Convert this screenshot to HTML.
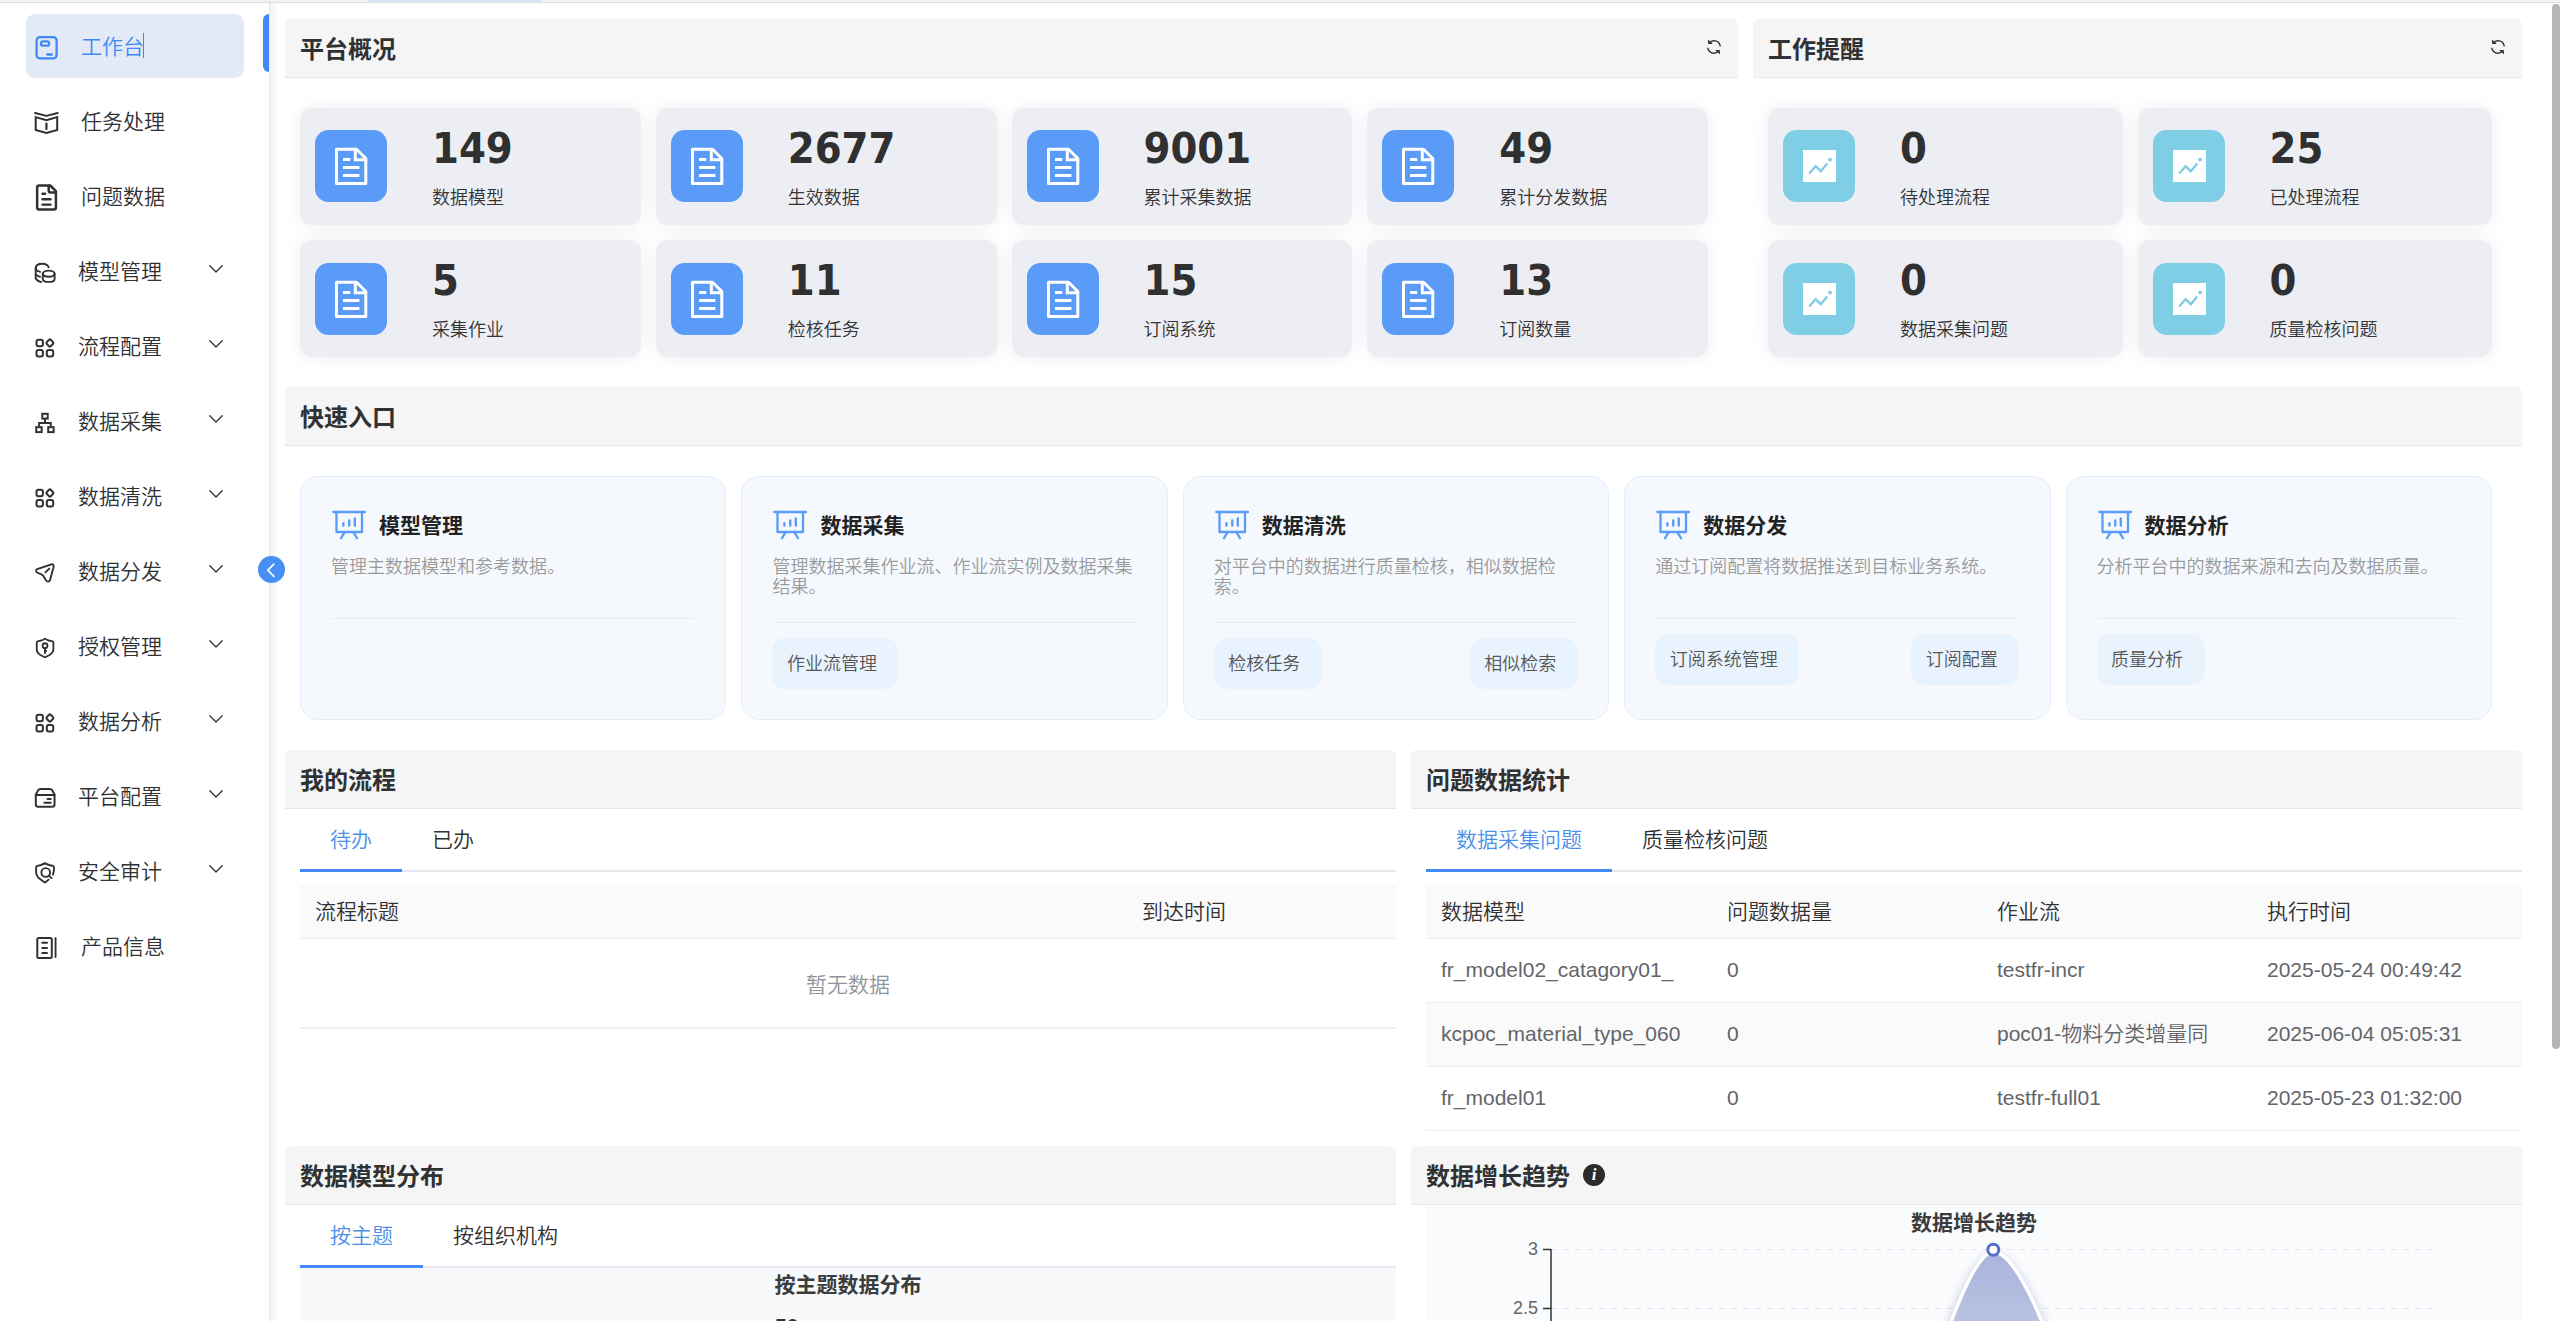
<!DOCTYPE html>
<html lang="zh-CN">
<head>
<meta charset="utf-8">
<title>工作台</title>
<style>
*{box-sizing:border-box;margin:0;padding:0}
html,body{width:2560px;height:1321px;overflow:hidden;background:#fff}
body{position:relative;font-family:"Liberation Sans","Noto Sans CJK SC",sans-serif;font-size:21px;font-weight:350;color:#303133;-webkit-font-smoothing:antialiased}
.abs{position:absolute}
/* top strip */
#topstrip{position:absolute;left:0;top:0;width:2560px;height:3px;background:#f1f2f5;border-bottom:1px solid #dcdee3}
#topstrip i{position:absolute;left:368px;top:0;width:174px;height:2px;background:#dbe5f6}
/* sidebar */
#side{position:absolute;left:0;top:3px;width:270px;height:1318px;background:#fff;border-right:1px solid #e6e6e8}
#mainshadow{position:absolute;left:270px;top:3px;width:9px;height:1318px;background:linear-gradient(90deg,rgba(0,0,0,.05),rgba(0,0,0,0))}
.mi{position:absolute;left:26px;width:218px;height:64px;border-radius:9px;color:#303133;font-size:21px;line-height:64px;white-space:nowrap}
.mi.act{background:#e1eaf6;color:#4189f3}
.mi svg.ic{position:absolute;left:8px;top:20px;width:24px;height:24px;overflow:visible}
.mi span{position:absolute;left:55px;top:1px}
.mi.sub span{left:52px}
.mi svg.ar{position:absolute;left:183px;top:26px;width:14px;height:8px;overflow:visible}
#actbar{position:absolute;left:263px;top:14px;width:6px;height:58px;background:#4289f7;border-radius:6px 0 0 6px}
#collapse{position:absolute;left:258.2px;top:556px;width:27px;height:27px;border-radius:50%;background:#468ff5}
#scroll{position:absolute;left:2552px;top:4px;width:8px;height:1045px;background:#b5b6ba;border-radius:4px}
/* panels */
.ph{position:absolute;height:59px;background:#f5f5f5;border-bottom:1px solid #e2e9f5;border-radius:6px 6px 0 0;font-weight:bold;font-size:24px;line-height:61px;padding-left:15px;color:#303133;white-space:nowrap}
.sc{position:absolute;height:117px;background:#edeef4;border-radius:12px;box-shadow:0 0 18px rgba(0,0,0,.07)}
.sc .ib{position:absolute;left:15px;top:22px;width:72px;height:72px;border-radius:13.5px;background:#5b9bf8}
.sc .ib.t{background:#80cde6}
.sc .n{position:absolute;left:132px;top:14px;font:bold 43px/52px "DejaVu Sans Condensed","DejaVu Sans","Liberation Sans",sans-serif;color:#303030;white-space:nowrap}
.sc .l{position:absolute;left:132px;top:77.75px;font-size:18px;line-height:24px;color:#333;white-space:nowrap}
.mi .caret{position:absolute;left:117px;top:19px;width:1px;height:25px;background:#3d86ee}
.rfw{position:absolute;top:20px;width:16px;height:16px;line-height:0}
.rfw svg{display:block}
.infoi{position:absolute;left:172px;top:18px;width:22px;height:22px;border-radius:50%;background:#2b2b2b;color:#fff;font:italic bold 17px/22px "Liberation Serif","DejaVu Serif",serif;text-align:center}
/* quick cards */
.qc{position:absolute;top:476px;width:426.4px;height:244px;background:#f5f9fe;border:1.5px solid #e2edfc;border-radius:18px}
.qc .qi{position:absolute;left:31px;top:33px}
.qc .qt{position:absolute;left:78px;top:34px;font-weight:bold;font-size:21px;line-height:30px;color:#222;white-space:nowrap}
.qc .qd{position:absolute;left:30px;top:79.5px;width:370px;font-size:18px;line-height:20.5px;color:#9a9a9a;white-space:nowrap}
.qc .qv{position:absolute;left:30px;width:364px;height:1px;background:#e9edf2}
.qc .qbs{position:absolute;left:30px;width:364px;display:flex;justify-content:space-between}
.qb{display:block;height:50.5px;line-height:52px;padding:0 21.5px 0 14.5px;background:#e9f3fe;border-radius:13px;font-size:18px;color:#555;white-space:nowrap}
/* tabs & tables */
.tabs{position:absolute;height:63px;border-bottom:2px solid #e4e7ed;white-space:nowrap;font-size:0}
.tab{position:relative;display:inline-block;height:61px;line-height:61.5px;text-align:center;font-size:21px;color:#303133;vertical-align:top}
.tab.on{color:#4a8fe9}
.tab.on::after{content:"";position:absolute;left:0;right:0;bottom:-2px;height:3px;background:#4289f7}
.th{position:absolute;height:54px;background:#fafafa;border-bottom:1px solid #ebeef5;font-size:21px;line-height:54px;color:#303133}
.th span,.tr span{position:absolute;top:0;white-space:nowrap}
.tr{position:absolute;height:64px;border-bottom:1px solid #ebeef5;font-size:21px;line-height:62.5px;color:#63656a}
.tr.st{background:#fafafa}
.empty{position:absolute;height:90px;border-bottom:2px solid #ebeef5;text-align:center;font-size:21px;line-height:92px;color:#909399}
.chartbg{position:absolute;overflow:hidden}
.ct{position:absolute;left:0;width:100%;text-align:center;font-weight:bold;font-size:21px;line-height:28px;color:#3c3c3c}
.csub{position:absolute;left:475px;top:46px;font:bold 21px/24px "Liberation Sans",sans-serif;color:#333}
</style>
</head>
<body>
<div id="topstrip"><i></i></div>
<div id="side"></div>
<div id="mainshadow"></div>
<div id="actbar"></div>
<div id="scroll"></div>
<div class="mi act" style="top:14px"><svg class="ic" viewBox="0 0 24 24" fill="none" stroke="currentColor" stroke-width="2" stroke-linecap="round" stroke-linejoin="round"><g stroke-width="2.3"><rect x="2.6" y="3.05" width="20" height="21.4" rx="3.4"/><rect x="7" y="7.4" width="8.1" height="4.3" rx="2"/><path d="M13.3 20.5H17.8"/></g></svg><span>工作台</span><i class="caret"></i></div>
<div class="mi" style="top:89px"><svg class="ic" viewBox="0 0 24 24" fill="none" stroke="currentColor" stroke-width="2" stroke-linecap="round" stroke-linejoin="round"><g stroke-width="2"><path d="M1.1 4 12.45 6.9 23.7 4"/><path d="M1.7 8.1 12.45 11.3 23.2 8.1V21L12.45 23.9 1.7 21Z" stroke-linejoin="miter"/><path d="M12.45 14.6V20.1" stroke-width="2.2"/></g></svg><span>任务处理</span></div>
<div class="mi" style="top:164px"><svg class="ic" viewBox="0 0 24 24" fill="none" stroke="currentColor" stroke-width="2" stroke-linecap="round" stroke-linejoin="round"><g stroke-width="2.5"><path d="M5.15 1.5H16.2L21.9 7.2V23.5Q21.9 25.5 19.9 25.5H5.15Q3.15 25.5 3.15 23.5V3.5Q3.15 1.5 5.15 1.5Z"/><path d="M14.7 1.8V6.6Q14.7 8.6 16.7 8.6H21.6"/><path d="M8.5 9.7H11.1M8.5 15.2H16.55M8.5 20.6H16.55" stroke-width="2.4"/></g></svg><span>问题数据</span></div>
<div class="mi sub" style="top:239px"><svg class="ic" viewBox="0 0 24 24" fill="none" stroke="currentColor" stroke-width="2" stroke-linecap="round" stroke-linejoin="round"><g stroke-width="1.9"><path d="M1.7 9.3C1.7 6 5 4.7 8.2 4.7 11.5 4.7 13.8 6 14.6 8.2"/><path d="M1.7 9.3V19.3"/><path d="M1.7 10.2C2.7 11.6 4.5 12.5 6.2 12.9M1.7 15.3C2.7 16.7 4.5 17.5 6.2 17.9M1.7 19.3C2.5 21.2 5 22.4 7.2 23.1"/><ellipse cx="14.7" cy="14.7" rx="5.9" ry="3.1"/><path d="M8.8 14.7V19.9C8.8 21.6 11.4 22.9 14.7 22.9S20.6 21.6 20.6 19.9V14.7"/></g></svg><span>模型管理</span><svg class="ar" viewBox="0 0 14 8" fill="none" stroke="#303133" stroke-width="1.300" stroke-linecap="round" stroke-linejoin="round"><path d="M.8.800 7 7 13.200.8"/></svg></div>
<div class="mi sub" style="top:314px"><svg class="ic" viewBox="0 0 24 24" fill="none" stroke="currentColor" stroke-width="2" stroke-linecap="round" stroke-linejoin="round"><g stroke-width="2"><rect x="2.5" y="5.7" width="6.4" height="6.5" rx="2"/><rect x="2.5" y="16" width="6.4" height="6.4" rx="2"/><rect x="12.8" y="16" width="6.4" height="6.4" rx="2"/><rect x="13" y="6.1" width="5.8" height="5.8" rx="1.5" transform="rotate(45 15.9 9)"/></g></svg><span>流程配置</span><svg class="ar" viewBox="0 0 14 8" fill="none" stroke="#303133" stroke-width="1.300" stroke-linecap="round" stroke-linejoin="round"><path d="M.8.800 7 7 13.200.8"/></svg></div>
<div class="mi sub" style="top:389px"><svg class="ic" viewBox="0 0 24 24" fill="none" stroke="currentColor" stroke-width="2" stroke-linecap="round" stroke-linejoin="round"><g stroke-width="2" stroke-linejoin="miter" stroke-linecap="butt"><rect x="8.3" y="4.8" width="5.4" height="4.8"/><rect x="2.25" y="18.15" width="5.4" height="4.95"/><rect x="14.2" y="18.15" width="5.4" height="4.95"/><path d="M11 9.6V14M5.1 17.2V14H16.75V17.2"/></g></svg><span>数据采集</span><svg class="ar" viewBox="0 0 14 8" fill="none" stroke="#303133" stroke-width="1.300" stroke-linecap="round" stroke-linejoin="round"><path d="M.8.800 7 7 13.200.8"/></svg></div>
<div class="mi sub" style="top:464px"><svg class="ic" viewBox="0 0 24 24" fill="none" stroke="currentColor" stroke-width="2" stroke-linecap="round" stroke-linejoin="round"><g stroke-width="2"><rect x="2.5" y="5.7" width="6.4" height="6.5" rx="2"/><rect x="2.5" y="16" width="6.4" height="6.4" rx="2"/><rect x="12.8" y="16" width="6.4" height="6.4" rx="2"/><rect x="13" y="6.1" width="5.8" height="5.8" rx="1.5" transform="rotate(45 15.9 9)"/></g></svg><span>数据清洗</span><svg class="ar" viewBox="0 0 14 8" fill="none" stroke="#303133" stroke-width="1.300" stroke-linecap="round" stroke-linejoin="round"><path d="M.8.800 7 7 13.200.8"/></svg></div>
<div class="mi sub" style="top:539px"><svg class="ic" viewBox="0 0 24 24" fill="none" stroke="currentColor" stroke-width="2" stroke-linecap="round" stroke-linejoin="round"><g stroke-width="1.9"><path d="M17.45 5.3 3.2 10.2C1.7 10.8 1.6 12.6 3.2 13.5L7.75 15.6C8.8 16.1 9.3 16.6 9.6 17.2L12 21.4C12.9 23 15.3 23 15.9 21.4L19.6 8.1C20.1 6.2 18.9 4.8 17.45 5.3Z"/><path d="M11.4 13.4 15.3 9.6"/></g></svg><span>数据分发</span><svg class="ar" viewBox="0 0 14 8" fill="none" stroke="#303133" stroke-width="1.300" stroke-linecap="round" stroke-linejoin="round"><path d="M.8.800 7 7 13.200.8"/></svg></div>
<div class="mi sub" style="top:614px"><svg class="ic" viewBox="0 0 24 24" fill="none" stroke="currentColor" stroke-width="2" stroke-linecap="round" stroke-linejoin="round"><g stroke-width="1.8"><path d="M11 4.6C10 5.4 8.6 6.200 7.4 6.5L4.2 7.1C3.2 7.3 2.75 7.9 2.75 8.8V15.6C2.75 17.8 4.2 19.5 6 20.7L10.2 23C10.7 23.3 11.3 23.3 11.8 23L16 20.7C17.8 19.5 19.4 17.8 19.4 15.6V8.8C19.4 7.9 18.9 7.3 17.9 7.1L14.7 6.5C13.4 6.2 12 5.4 11 4.6Z"/><circle cx="11" cy="11.7" r="2.45"/><path d="M11 14.2V19.3"/><path d="M11.2 15.9 13 16.900 11.2 17.9Z" fill="currentColor" stroke-width="1"/></g></svg><span>授权管理</span><svg class="ar" viewBox="0 0 14 8" fill="none" stroke="#303133" stroke-width="1.300" stroke-linecap="round" stroke-linejoin="round"><path d="M.8.800 7 7 13.200.8"/></svg></div>
<div class="mi sub" style="top:689px"><svg class="ic" viewBox="0 0 24 24" fill="none" stroke="currentColor" stroke-width="2" stroke-linecap="round" stroke-linejoin="round"><g stroke-width="2"><rect x="2.5" y="5.7" width="6.4" height="6.5" rx="2"/><rect x="2.5" y="16" width="6.4" height="6.4" rx="2"/><rect x="12.8" y="16" width="6.4" height="6.4" rx="2"/><rect x="13" y="6.1" width="5.8" height="5.8" rx="1.5" transform="rotate(45 15.9 9)"/></g></svg><span>数据分析</span><svg class="ar" viewBox="0 0 14 8" fill="none" stroke="#303133" stroke-width="1.300" stroke-linecap="round" stroke-linejoin="round"><path d="M.8.800 7 7 13.200.8"/></svg></div>
<div class="mi sub" style="top:764px"><svg class="ic" viewBox="0 0 24 24" fill="none" stroke="currentColor" stroke-width="2" stroke-linecap="round" stroke-linejoin="round"><g stroke-width="2"><path d="M1.8 11H20.55V20.3Q20.55 22.8 18.05 22.8H4.3Q1.8 22.8 1.8 20.3Z"/><path d="M1.8 10.6 3.9 6.6Q4.8 5 6.6 5H15.7Q17.5 5 18.4 6.6L20.55 10.6"/><path d="M13.6 14.9H16.75M10.3 18.7H16.75"/></g></svg><span>平台配置</span><svg class="ar" viewBox="0 0 14 8" fill="none" stroke="#303133" stroke-width="1.300" stroke-linecap="round" stroke-linejoin="round"><path d="M.8.800 7 7 13.200.8"/></svg></div>
<div class="mi sub" style="top:839px"><svg class="ic" viewBox="0 0 24 24" fill="none" stroke="currentColor" stroke-width="2" stroke-linecap="round" stroke-linejoin="round"><g stroke-width="1.9"><path d="M19 15.6C19.7 13.5 20 11 20 8.6 20 7.6 19.5 7 18.5 6.800L15 6C13.6 5.6 12.2 4.9 10.95 4.1 9.7 4.9 8.3 5.6 6.9 6L3.6 6.800C2.6 7 2.15 7.6 2.15 8.6V13C2.15 16.4 3.9 18.6 6 20.1L10.1 23C10.6 23.4 11.3 23.4 11.8 23L14.6 20.6"/><circle cx="11.7" cy="13.5" r="4.35"/><path d="M15.1 16.9 17.6 19.1"/></g></svg><span>安全审计</span><svg class="ar" viewBox="0 0 14 8" fill="none" stroke="#303133" stroke-width="1.300" stroke-linecap="round" stroke-linejoin="round"><path d="M.8.800 7 7 13.200.8"/></svg></div>
<div class="mi" style="top:914px"><svg class="ic" viewBox="0 0 24 24" fill="none" stroke="currentColor" stroke-width="2" stroke-linecap="round" stroke-linejoin="round"><g stroke-width="2"><rect x="3.3" y="3.9" width="14.5" height="20" rx="1.5"/><path d="M8.3 8.8H13M8.3 14H13M8.3 19.05H13"/><path d="M21.55 4.2V23.1" stroke-width="1.9"/></g></svg><span>产品信息</span></div>
<div id="collapse"><svg viewBox="0 0 27 27" width="27" height="27" fill="none" stroke="#fff" stroke-width="1.700" stroke-linecap="round" stroke-linejoin="round"><path d="M15.900 8.200 9.800 14.200 15.900 20.300"/></svg></div>
<div class="ph" style="left:285px;top:19px;width:1453px">平台概况<span class="rfw" style="left:1421px"><svg class="rf" viewBox="0 0 16 16" width="16" height="16" fill="none" stroke="#303133" stroke-width="1.400" stroke-linecap="round" stroke-linejoin="round"><path d="M14.200 6.800A6.300 6.300 0 0 0 3 4.300"/><path d="M1.800 9.200A6.300 6.300 0 0 0 13 11.700"/><path d="M2.600 1.800 3 4.400 5.700 4.300" fill="#303133"/><path d="M13.400 14.200 13 11.600 10.300 11.700" fill="#303133"/></svg></span></div>
<div class="ph" style="left:1753px;top:19px;width:769px">工作提醒<span class="rfw" style="left:737px"><svg class="rf" viewBox="0 0 16 16" width="16" height="16" fill="none" stroke="#303133" stroke-width="1.400" stroke-linecap="round" stroke-linejoin="round"><path d="M14.200 6.800A6.300 6.300 0 0 0 3 4.300"/><path d="M1.800 9.200A6.300 6.300 0 0 0 13 11.700"/><path d="M2.600 1.800 3 4.400 5.700 4.300" fill="#303133"/><path d="M13.400 14.200 13 11.600 10.300 11.700" fill="#303133"/></svg></span></div>
<div class="sc" style="left:300px;top:108px;width:340.75px"><div class="ib"><svg viewBox="0 0 72 72" width="72" height="72" fill="none" stroke="#fff" stroke-width="3" stroke-linejoin="round"><path d="M21.500 19.200H41.500L50.800 28.500V53.500H21.500Z"/><path d="M40.300 19.200V29.700H50.800" stroke-linejoin="miter"/><path d="M28 29.600H35.300M28 37.500H44.400M28 45.500H44.400" stroke-linecap="butt"/></svg></div><div class="n">149</div><div class="l">数据模型</div></div>
<div class="sc" style="left:655.75px;top:108px;width:340.75px"><div class="ib"><svg viewBox="0 0 72 72" width="72" height="72" fill="none" stroke="#fff" stroke-width="3" stroke-linejoin="round"><path d="M21.500 19.200H41.500L50.800 28.500V53.500H21.500Z"/><path d="M40.300 19.200V29.700H50.800" stroke-linejoin="miter"/><path d="M28 29.600H35.300M28 37.500H44.400M28 45.500H44.400" stroke-linecap="butt"/></svg></div><div class="n">2677</div><div class="l">生效数据</div></div>
<div class="sc" style="left:1011.5px;top:108px;width:340.75px"><div class="ib"><svg viewBox="0 0 72 72" width="72" height="72" fill="none" stroke="#fff" stroke-width="3" stroke-linejoin="round"><path d="M21.500 19.200H41.500L50.800 28.500V53.500H21.500Z"/><path d="M40.300 19.200V29.700H50.800" stroke-linejoin="miter"/><path d="M28 29.600H35.300M28 37.500H44.400M28 45.500H44.400" stroke-linecap="butt"/></svg></div><div class="n">9001</div><div class="l">累计采集数据</div></div>
<div class="sc" style="left:1367.25px;top:108px;width:340.75px"><div class="ib"><svg viewBox="0 0 72 72" width="72" height="72" fill="none" stroke="#fff" stroke-width="3" stroke-linejoin="round"><path d="M21.500 19.200H41.500L50.800 28.500V53.500H21.500Z"/><path d="M40.300 19.200V29.700H50.800" stroke-linejoin="miter"/><path d="M28 29.600H35.300M28 37.500H44.400M28 45.500H44.400" stroke-linecap="butt"/></svg></div><div class="n">49</div><div class="l">累计分发数据</div></div>
<div class="sc" style="left:300px;top:240px;width:340.75px"><div class="ib" style="top:23px"><svg viewBox="0 0 72 72" width="72" height="72" fill="none" stroke="#fff" stroke-width="3" stroke-linejoin="round"><path d="M21.500 19.200H41.500L50.800 28.500V53.500H21.500Z"/><path d="M40.300 19.200V29.700H50.800" stroke-linejoin="miter"/><path d="M28 29.600H35.300M28 37.500H44.400M28 45.500H44.400" stroke-linecap="butt"/></svg></div><div class="n">5</div><div class="l">采集作业</div></div>
<div class="sc" style="left:655.75px;top:240px;width:340.75px"><div class="ib" style="top:23px"><svg viewBox="0 0 72 72" width="72" height="72" fill="none" stroke="#fff" stroke-width="3" stroke-linejoin="round"><path d="M21.500 19.200H41.500L50.800 28.500V53.500H21.500Z"/><path d="M40.300 19.200V29.700H50.800" stroke-linejoin="miter"/><path d="M28 29.600H35.300M28 37.500H44.400M28 45.500H44.400" stroke-linecap="butt"/></svg></div><div class="n">11</div><div class="l">检核任务</div></div>
<div class="sc" style="left:1011.5px;top:240px;width:340.75px"><div class="ib" style="top:23px"><svg viewBox="0 0 72 72" width="72" height="72" fill="none" stroke="#fff" stroke-width="3" stroke-linejoin="round"><path d="M21.500 19.200H41.500L50.800 28.500V53.500H21.500Z"/><path d="M40.300 19.200V29.700H50.800" stroke-linejoin="miter"/><path d="M28 29.600H35.300M28 37.500H44.400M28 45.500H44.400" stroke-linecap="butt"/></svg></div><div class="n">15</div><div class="l">订阅系统</div></div>
<div class="sc" style="left:1367.25px;top:240px;width:340.75px"><div class="ib" style="top:23px"><svg viewBox="0 0 72 72" width="72" height="72" fill="none" stroke="#fff" stroke-width="3" stroke-linejoin="round"><path d="M21.500 19.200H41.500L50.800 28.500V53.500H21.500Z"/><path d="M40.300 19.200V29.700H50.800" stroke-linejoin="miter"/><path d="M28 29.600H35.300M28 37.500H44.400M28 45.500H44.400" stroke-linecap="butt"/></svg></div><div class="n">13</div><div class="l">订阅数量</div></div>
<div class="sc" style="left:1768px;top:108px;width:354.5px"><div class="ib t"><svg viewBox="0 0 72 72" width="72" height="72"><rect x="20" y="20" width="33" height="32" fill="#fff"/><path d="M26.200 43.400 32.600 36.200 37.800 41.200 44.200 33.600" fill="none" stroke="#7fcbe4" stroke-width="2.300"/><circle cx="47.100" cy="29.600" r="1.900" fill="#7fcbe4"/></svg></div><div class="n">0</div><div class="l">待处理流程</div></div>
<div class="sc" style="left:2137.5px;top:108px;width:354.5px"><div class="ib t"><svg viewBox="0 0 72 72" width="72" height="72"><rect x="20" y="20" width="33" height="32" fill="#fff"/><path d="M26.200 43.400 32.600 36.200 37.800 41.200 44.200 33.600" fill="none" stroke="#7fcbe4" stroke-width="2.300"/><circle cx="47.100" cy="29.600" r="1.900" fill="#7fcbe4"/></svg></div><div class="n">25</div><div class="l">已处理流程</div></div>
<div class="sc" style="left:1768px;top:240px;width:354.5px"><div class="ib t" style="top:23px"><svg viewBox="0 0 72 72" width="72" height="72"><rect x="20" y="20" width="33" height="32" fill="#fff"/><path d="M26.200 43.400 32.600 36.200 37.800 41.200 44.200 33.600" fill="none" stroke="#7fcbe4" stroke-width="2.300"/><circle cx="47.100" cy="29.600" r="1.900" fill="#7fcbe4"/></svg></div><div class="n">0</div><div class="l">数据采集问题</div></div>
<div class="sc" style="left:2137.5px;top:240px;width:354.5px"><div class="ib t" style="top:23px"><svg viewBox="0 0 72 72" width="72" height="72"><rect x="20" y="20" width="33" height="32" fill="#fff"/><path d="M26.200 43.400 32.600 36.200 37.800 41.200 44.200 33.600" fill="none" stroke="#7fcbe4" stroke-width="2.300"/><circle cx="47.100" cy="29.600" r="1.900" fill="#7fcbe4"/></svg></div><div class="n">0</div><div class="l">质量检核问题</div></div>
<div class="ph" style="left:285px;top:387px;width:2237px">快速入口</div>
<div class="qc" style="left:300px"><svg class="qi" viewBox="0 0 34 30" width="34" height="30" fill="none" stroke="#5b9bf8" stroke-width="2.300" stroke-linecap="round" stroke-linejoin="round"><path d="M1.300 2H33"/><path d="M4.500 2V22H30V2"/><path d="M12.500 22.300 8.500 29M21.500 22.300 25.500 29" stroke-linecap="butt"/><path d="M11.400 13.300V15.500M17.250 10.500V15.500M22.800 8.500V15.500" stroke-width="2.400"/></svg><div class="qt">模型管理</div><div class="qd">管理主数据模型和参考数据。</div><div class="qv" style="top:140.5px"></div><div class="qbs" style="top:157px"></div></div>
<div class="qc" style="left:741.4px"><svg class="qi" viewBox="0 0 34 30" width="34" height="30" fill="none" stroke="#5b9bf8" stroke-width="2.300" stroke-linecap="round" stroke-linejoin="round"><path d="M1.300 2H33"/><path d="M4.500 2V22H30V2"/><path d="M12.500 22.300 8.500 29M21.500 22.300 25.500 29" stroke-linecap="butt"/><path d="M11.400 13.300V15.500M17.250 10.500V15.500M22.800 8.500V15.500" stroke-width="2.400"/></svg><div class="qt">数据采集</div><div class="qd">管理数据采集作业流、作业流实例及数据采集<br>结果。</div><div class="qv" style="top:145px"></div><div class="qbs" style="top:161px"><span class="qb">作业流管理</span></div></div>
<div class="qc" style="left:1182.8px"><svg class="qi" viewBox="0 0 34 30" width="34" height="30" fill="none" stroke="#5b9bf8" stroke-width="2.300" stroke-linecap="round" stroke-linejoin="round"><path d="M1.300 2H33"/><path d="M4.500 2V22H30V2"/><path d="M12.500 22.300 8.500 29M21.500 22.300 25.500 29" stroke-linecap="butt"/><path d="M11.400 13.300V15.500M17.250 10.500V15.500M22.800 8.500V15.500" stroke-width="2.400"/></svg><div class="qt">数据清洗</div><div class="qd">对平台中的数据进行质量检核，相似数据检<br>索。</div><div class="qv" style="top:145px"></div><div class="qbs" style="top:161px"><span class="qb">检核任务</span><span class="qb">相似检索</span></div></div>
<div class="qc" style="left:1624.2px"><svg class="qi" viewBox="0 0 34 30" width="34" height="30" fill="none" stroke="#5b9bf8" stroke-width="2.300" stroke-linecap="round" stroke-linejoin="round"><path d="M1.300 2H33"/><path d="M4.500 2V22H30V2"/><path d="M12.500 22.300 8.500 29M21.500 22.300 25.500 29" stroke-linecap="butt"/><path d="M11.400 13.300V15.500M17.250 10.500V15.500M22.800 8.500V15.500" stroke-width="2.400"/></svg><div class="qt">数据分发</div><div class="qd">通过订阅配置将数据推送到目标业务系统。</div><div class="qv" style="top:140.5px"></div><div class="qbs" style="top:157px"><span class="qb">订阅系统管理</span><span class="qb">订阅配置</span></div></div>
<div class="qc" style="left:2065.6px"><svg class="qi" viewBox="0 0 34 30" width="34" height="30" fill="none" stroke="#5b9bf8" stroke-width="2.300" stroke-linecap="round" stroke-linejoin="round"><path d="M1.300 2H33"/><path d="M4.500 2V22H30V2"/><path d="M12.500 22.300 8.500 29M21.500 22.300 25.500 29" stroke-linecap="butt"/><path d="M11.400 13.300V15.500M17.250 10.500V15.500M22.800 8.500V15.500" stroke-width="2.400"/></svg><div class="qt">数据分析</div><div class="qd">分析平台中的数据来源和去向及数据质量。</div><div class="qv" style="top:140.5px"></div><div class="qbs" style="top:157px"><span class="qb">质量分析</span></div></div>
<div class="ph" style="left:285px;top:750px;width:1111px">我的流程</div>
<div class="tabs" style="left:300px;top:809px;width:1096px"><span class="tab on" style="width:102px">待办</span><span class="tab" style="width:102px">已办</span></div>
<div class="th" style="left:300px;top:885px;width:1096px"><span style="left:15px">流程标题</span><span style="left:842px">到达时间</span></div>
<div class="empty" style="left:300px;top:939px;width:1096px">暂无数据</div>
<div class="ph" style="left:1411px;top:750px;width:1111px">问题数据统计</div>
<div class="tabs" style="left:1426px;top:809px;width:1096px"><span class="tab on" style="width:186px">数据采集问题</span><span class="tab" style="width:186px">质量检核问题</span></div>
<div class="th" style="left:1426px;top:885px;width:1096px"><span style="left:15px">数据模型</span><span style="left:301px">问题数据量</span><span style="left:571px">作业流</span><span style="left:841px">执行时间</span></div>
<div class="tr" style="left:1426px;top:939px;width:1096px"><span style="left:15px">fr_model02_catagory01_</span><span style="left:301px">0</span><span style="left:571px">testfr-incr</span><span style="left:841px">2025-05-24 00:49:42</span></div>
<div class="tr st" style="left:1426px;top:1003px;width:1096px"><span style="left:15px">kcpoc_material_type_060</span><span style="left:301px">0</span><span style="left:571px">poc01-物料分类增量同</span><span style="left:841px">2025-06-04 05:05:31</span></div>
<div class="tr" style="left:1426px;top:1067px;width:1096px"><span style="left:15px">fr_model01</span><span style="left:301px">0</span><span style="left:571px">testfr-full01</span><span style="left:841px">2025-05-23 01:32:00</span></div>
<div class="ph" style="left:285px;top:1146px;width:1111px">数据模型分布</div>
<div class="tabs" style="left:300px;top:1205px;width:1096px"><span class="tab on" style="width:123px">按主题</span><span class="tab" style="width:165px">按组织机构</span></div>
<div class="chartbg" style="left:300px;top:1268px;width:1096px;height:53px;background:#f8f9fb"><div class="ct" style="top:3px">按主题数据分布</div><div class="csub">50</div></div>
<div class="ph" style="left:1411px;top:1146px;width:1111px">数据增长趋势<span class="infoi">i</span></div>
<div class="chartbg" style="left:1426px;top:1205px;width:1096px;height:116px;background:#fafbfd"><div class="ct" style="top:4px">数据增长趋势</div>
<svg class="abs" style="left:0;top:0" width="1096" height="116" viewBox="0 0 1096 116">
<defs><linearGradient id="ag" x1="0" y1="0" x2="0" y2="1"><stop offset="0" stop-color="#a9b4dc"/><stop offset="1" stop-color="#c3cae6"/></linearGradient>
<filter id="sh" x="-20%" y="-20%" width="140%" height="140%"><feGaussianBlur stdDeviation="5"/></filter></defs>
<g stroke="#e3e6ee" stroke-width="1.2" stroke-dasharray="6 6"><path d="M125 44.500H1009M125 103.500H1009"/></g>
<path d="M125 44V116" stroke="#333" stroke-width="1.500"/><path d="M117 44.500H125M117 103.500H125" stroke="#333" stroke-width="1.500"/>
<text x="112" y="50" text-anchor="end" font-size="18" fill="#666" font-family="Liberation Sans, sans-serif">3</text>
<text x="112" y="109" text-anchor="end" font-size="18" fill="#666" font-family="Liberation Sans, sans-serif">2.5</text>
<path d="M511.3 154.9 L513.3 149.1 L515.3 143.4 L517.3 137.8 L519.3 132.2 L521.3 126.8 L523.3 121.4 L525.3 116.2 L527.3 111.0 L529.3 106.0 L531.3 101.1 L533.3 96.3 L535.3 91.6 L537.3 87.1 L539.3 82.8 L541.3 78.6 L543.3 74.6 L545.3 70.7 L547.3 67.1 L549.3 63.7 L551.3 60.6 L553.3 57.7 L555.3 55.1 L557.3 52.8 L559.3 50.8 L561.3 49.2 L563.3 48.0 L565.3 47.3 L567.3 47.0 L569.3 47.2 L571.3 47.7 L573.3 48.5 L575.3 49.7 L577.3 51.1 L579.3 52.8 L581.3 54.7 L583.3 56.9 L585.3 59.3 L587.3 61.9 L589.3 64.7 L591.3 67.7 L593.3 70.9 L595.3 74.2 L597.3 77.7 L599.3 81.4 L601.3 85.1 L603.3 89.1 L605.3 93.1 L607.3 97.3 L609.3 101.6 L611.3 106.0 L613.3 110.5 L615.3 115.2 L617.3 119.9 L619.3 124.7 L621.3 129.6 L623.3 134.6 L625.3 139.7 L627.3 144.9 L629.3 150.1 L631.3 155.4" fill="none" stroke="rgba(50,60,120,.4)" stroke-width="6" filter="url(#sh)" transform="translate(0,7)"/>
<path d="M511.3 154.9 L513.3 149.1 L515.3 143.4 L517.3 137.8 L519.3 132.2 L521.3 126.8 L523.3 121.4 L525.3 116.2 L527.3 111.0 L529.3 106.0 L531.3 101.1 L533.3 96.3 L535.3 91.6 L537.3 87.1 L539.3 82.8 L541.3 78.6 L543.3 74.6 L545.3 70.7 L547.3 67.1 L549.3 63.7 L551.3 60.6 L553.3 57.7 L555.3 55.1 L557.3 52.8 L559.3 50.8 L561.3 49.2 L563.3 48.0 L565.3 47.3 L567.3 47.0 L569.3 47.2 L571.3 47.7 L573.3 48.5 L575.3 49.7 L577.3 51.1 L579.3 52.8 L581.3 54.7 L583.3 56.9 L585.3 59.3 L587.3 61.9 L589.3 64.7 L591.3 67.7 L593.3 70.9 L595.3 74.2 L597.3 77.7 L599.3 81.4 L601.3 85.1 L603.3 89.1 L605.3 93.1 L607.3 97.3 L609.3 101.6 L611.3 106.0 L613.3 110.5 L615.3 115.2 L617.3 119.9 L619.3 124.7 L621.3 129.6 L623.3 134.6 L625.3 139.7 L627.3 144.9 L629.3 150.1 L631.3 155.4Z" fill="url(#ag)"/>
<path d="M511.3 154.9 L513.3 149.1 L515.3 143.4 L517.3 137.8 L519.3 132.2 L521.3 126.8 L523.3 121.4 L525.3 116.2 L527.3 111.0 L529.3 106.0 L531.3 101.1 L533.3 96.3 L535.3 91.6 L537.3 87.1 L539.3 82.8 L541.3 78.6 L543.3 74.6 L545.3 70.7 L547.3 67.1 L549.3 63.7 L551.3 60.6 L553.3 57.7 L555.3 55.1 L557.3 52.8 L559.3 50.8 L561.3 49.2 L563.3 48.0 L565.3 47.3 L567.3 47.0 L569.3 47.2 L571.3 47.7 L573.3 48.5 L575.3 49.7 L577.3 51.1 L579.3 52.8 L581.3 54.7 L583.3 56.9 L585.3 59.3 L587.3 61.9 L589.3 64.7 L591.3 67.7 L593.3 70.9 L595.3 74.2 L597.3 77.7 L599.3 81.4 L601.3 85.1 L603.3 89.1 L605.3 93.1 L607.3 97.3 L609.3 101.6 L611.3 106.0 L613.3 110.5 L615.3 115.2 L617.3 119.9 L619.3 124.7 L621.3 129.6 L623.3 134.6 L625.3 139.7 L627.3 144.9 L629.3 150.1 L631.3 155.4" fill="none" stroke="#fff" stroke-width="3.4" stroke-linejoin="round"/>
<circle cx="567.3" cy="44.8" r="5.5" fill="#fff" stroke="#5470c6" stroke-width="3"/>
</svg></div>
</body>
</html>
